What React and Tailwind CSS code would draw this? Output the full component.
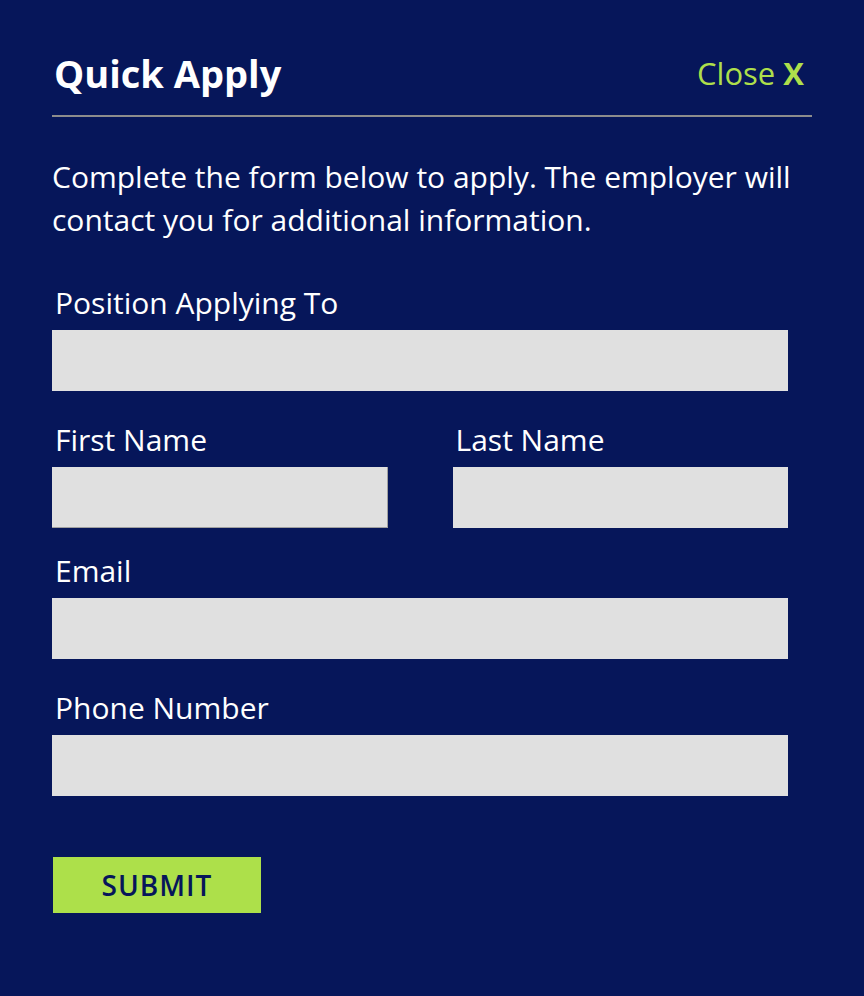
import React from 'react';

const Field = ({ label, className = '', inputClass = '' }) => (
	<label className={`block ${className}`}>
		<span className="block pl-[3px] text-[30px] leading-[40px] text-white">{label}</span>
		<input type="text" className={`mt-[7px] block w-full h-[61px] bg-[#e0e0e0] outline-none ${inputClass}`} />
	</label>
);

const App = () => {
	return (
		<div className="min-h-[996px] bg-[#06165a] pl-[52px] pt-[50px] font-['Open_Sans',sans-serif]">
			<div className="w-[760px] flex justify-between items-center border-b-2 border-[#8c8c8c] pb-[19px]">
				<h2 className="text-[38px] leading-[46px] font-bold text-white pl-[2px]">Quick Apply</h2>
				<button className="text-[31px] leading-[46px] text-[#aedf4b] pr-[8px]">
					Close <span className="font-bold">X</span>
				</button>
			</div>
			<p className="mt-[38px] w-[760px] text-[30px] leading-[43px] text-white">
				Complete the form below to apply. The employer will contact you for additional information.
			</p>
			<form className="w-[736px]" onSubmit={(e) => e.preventDefault()}>
				<Field label="Position Applying To" className="mt-[42px]" />
				<div className="mt-[29px] grid grid-cols-2 gap-x-[65px]">
					<Field label="First Name" inputClass="border-r border-b border-[#a0a0a0]" />
					<Field label="Last Name" />
				</div>
				<Field label="Email" className="mt-[23px]" />
				<Field label="Phone Number" className="mt-[29px]" />
				<button
					type="submit"
					className="mt-[61px] ml-[1px] w-[208px] h-[56px] bg-[#ade04a] text-[#06165a] text-[28px] font-semibold tracking-[1px]">
					SUBMIT
				</button>
			</form>
		</div>
	);
};

export default App;
